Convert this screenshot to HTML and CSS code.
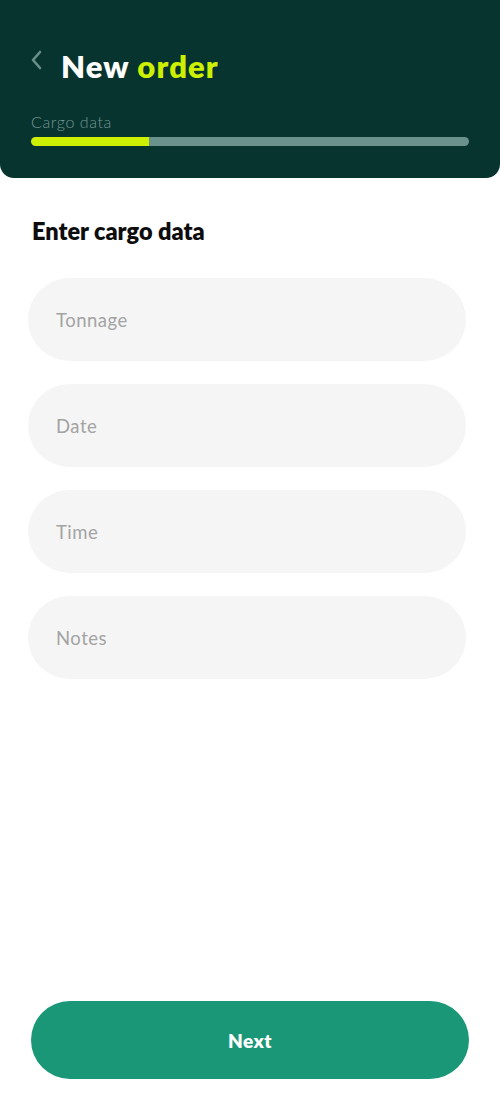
FILE: index.html
```html
<!DOCTYPE html>
<html lang="en">
<head>
<meta charset="utf-8">
<title>New order</title>
<link rel="stylesheet" href="styles.css">
</head>
<body>
<div class="screen">
  <header class="header">
    <div class="title-row">
      <svg class="back" width="14" height="20" viewBox="0 0 14 20" aria-hidden="true">
        <path d="M10 2 L3 10 L10 18" fill="none" stroke="#6a8f89" stroke-width="2.6" stroke-linecap="round" stroke-linejoin="round"/>
      </svg>
      <h1 class="title">New <span class="accent">order</span></h1>
    </div>
    <div class="step-label">Cargo data</div>
    <div class="progress"><div class="progress-fill" style="width:26.9%"></div></div>
  </header>
  <main class="content">
    <h2 class="heading">Enter cargo data</h2>
    <div class="fields">
      <div class="field">Tonnage</div>
      <div class="field">Date</div>
      <div class="field">Time</div>
      <div class="field">Notes</div>
    </div>
  </main>
  <div class="footer">
    <button class="next">Next</button>
  </div>
</div>
</body>
</html>
```
FILE: styles.css
```css
* { box-sizing: border-box; }
html, body { margin: 0; padding: 0; background: #ffffff; }
body { font-family: Lato, "Noto Sans", sans-serif; }
.screen { width: 500px; height: 1100px; display: flex; flex-direction: column; }
.header {
  background: #083430;
  border-radius: 0 0 14px 14px;
  height: 178px;
  padding: 44px 31px 0 31px;
}
.title-row { display: flex; align-items: center; height: 44px; }
.back { margin-left: -1px; margin-top: -12px; width: 14px; height: 20px; flex: none; }
.title {
  margin: 0 0 0 17px;
  font-size: 31px;
  font-weight: 800;
  color: #ffffff;
  letter-spacing: 1.1px;
}
.accent { color: #cdf000; }
.step-label {
  margin-top: 24px;
  font-size: 16px;
  color: #729893;
  font-weight: 300;
  letter-spacing: 0.6px;
  line-height: 20px;
}
.progress {
  margin-top: 5px;
  height: 9px;
  border-radius: 5px;
  background: #6a918b;
  overflow: hidden;
}
.progress-fill { height: 100%; background: #cdf000; border-radius: 5px 0 0 5px; }
.content { padding: 38px 34px 0 28px; flex: 1; }
.heading {
  margin: 0 0 32px 4px;
  font-size: 23.5px;
  font-weight: 800;
  color: #0d0d0d;
  line-height: 30px;
}
.fields { display: flex; flex-direction: column; gap: 23px; }
.field {
  height: 83px;
  border-radius: 42px;
  background: #f5f5f5;
  color: #a3a3a3;
  font-size: 18.5px;
  font-weight: 400;
  letter-spacing: 0.5px;
  display: flex;
  align-items: center;
  padding-left: 28px;
}
.footer { padding: 0 31px 21px 31px; }
.next {
  width: 100%;
  height: 78px;
  border: none;
  border-radius: 39px;
  background: #1a9777;
  color: #ffffff;
  font-family: Lato, "Noto Sans", sans-serif;
  font-size: 19px;
  font-weight: 800;
  letter-spacing: 0.4px;
}
```
